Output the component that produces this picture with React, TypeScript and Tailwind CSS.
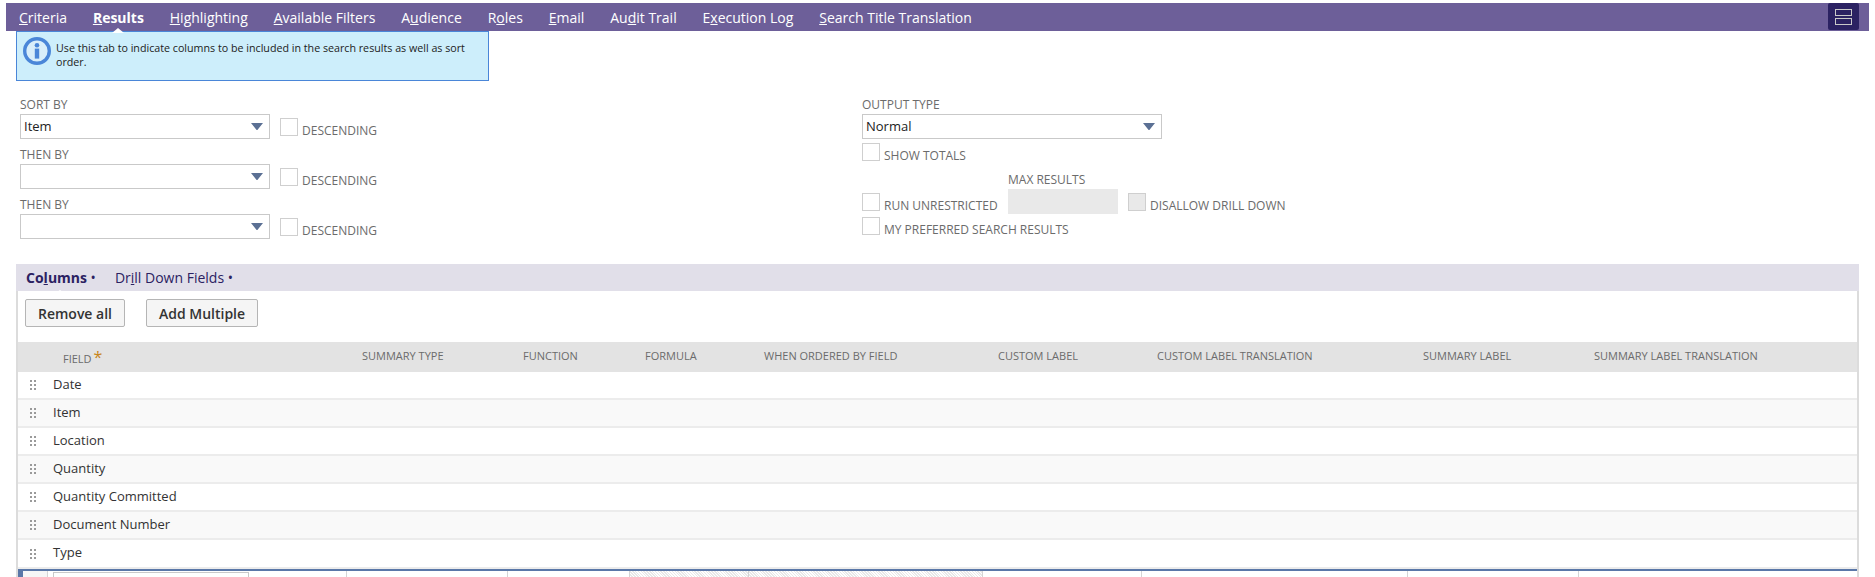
import React from 'react';

const font = { fontFamily: '"Open Sans", "Liberation Sans", sans-serif' };

const navTabs: { pre: string; key_: string; post: string; active?: boolean }[] = [
  { pre: '', key_: 'C', post: 'riteria' },
  { pre: '', key_: 'R', post: 'esults', active: true },
  { pre: '', key_: 'H', post: 'ighlighting' },
  { pre: '', key_: 'A', post: 'vailable Filters' },
  { pre: 'A', key_: 'u', post: 'dience' },
  { pre: 'R', key_: 'o', post: 'les' },
  { pre: '', key_: 'E', post: 'mail' },
  { pre: 'Au', key_: 'd', post: 'it Trail' },
  { pre: 'E', key_: 'x', post: 'ecution Log' },
  { pre: '', key_: 'S', post: 'earch Title Translation' },
];

const columns = [
  'SUMMARY TYPE',
  'FUNCTION',
  'FORMULA',
  'WHEN ORDERED BY FIELD',
  'CUSTOM LABEL',
  'CUSTOM LABEL TRANSLATION',
  'SUMMARY LABEL',
  'SUMMARY LABEL TRANSLATION',
];

const rows = ['Date', 'Item', 'Location', 'Quantity', 'Quantity Committed', 'Document Number', 'Type'];

const gridCols = 'grid grid-cols-[29px_299px_161px_122px_119px_234px_159px_266px_171px_278px]';

const Checkbox = ({ disabled }: { disabled?: boolean }) => (
  <span className={`block w-[18px] h-[18px] shrink-0 border border-[#cfcfcf] ${disabled ? 'bg-[#e9e9e9]' : 'bg-white'}`} />
);

const CheckLabel = ({ text, disabled }: { text: string; disabled?: boolean }) => (
  <div className="flex items-start">
    <Checkbox disabled={disabled} />
    <span className="ml-[4px] mt-[4px] text-[12px] leading-[17px] text-[#6b6b6b] whitespace-nowrap">{text}</span>
  </div>
);

const Select = ({ value, width }: { value: string; width: string }) => (
  <div className={`${width} h-[25px] border border-[#c9c9c9] bg-white flex items-center justify-between pl-[3px] pr-[6px] text-[13px] text-[#222]`}>
    <span>{value}</span>
    <svg width="12" height="7" viewBox="0 0 12 7" className="shrink-0">
      <path d="M0 0h12L6.8 6.4a1 1 0 0 1-1.6 0z" fill="#5b7094" />
    </svg>
  </div>
);

const SortRow = ({ label, value }: { label: string; value: string }) => (
  <div className="h-[50px]">
    <div className="text-[12px] leading-[16px] h-[17px] text-[#6b6b6b]">{label}</div>
    <div className="flex items-start">
      <Select value={value} width="w-[250px]" />
      <div className="ml-[10px] mt-[4px]">
        <CheckLabel text="DESCENDING" />
      </div>
    </div>
  </div>
);

const Grip = () => (
  <svg width="6" height="10" viewBox="0 0 6 10" fill="#9a9a9a">
    <rect x="0" y="0" width="2" height="2" />
    <rect x="4" y="0" width="2" height="2" />
    <rect x="0" y="4" width="2" height="2" />
    <rect x="4" y="4" width="2" height="2" />
    <rect x="0" y="8" width="2" height="2" />
    <rect x="4" y="8" width="2" height="2" />
  </svg>
);

export default function App() {
  return (
    <div style={font} className="w-[1875px] h-[577px] overflow-hidden bg-white pt-[3px]">
      {/* Top tab bar */}
      <div className="relative ml-[6px] w-[1863px] h-[28px] bg-[#6d5f99] flex items-center justify-between pl-[13px] pr-[10px]">
        <div className="flex items-center gap-[25.9px] text-[14px] text-white whitespace-nowrap">
          {navTabs.map((t) => (
            <div key={t.pre + t.key_ + t.post} className={`relative ${t.active ? 'font-bold' : ''}`}>
              {t.pre}
              <u>{t.key_}</u>
              {t.post}
              {t.active && (
                <span className="absolute left-1/2 -translate-x-1/2 top-[21px] w-0 h-0 border-x-[6px] border-x-transparent border-b-[5px] border-b-white" />
              )}
            </div>
          ))}
        </div>
        <div className="w-[31px] h-[27px] -mt-px rounded-[2px] bg-[#2b2262] flex flex-col items-center justify-center gap-[2px]">
          <span className="block w-[17px] h-[7px] border border-[#c9c9c9]" />
          <span className="block w-[17px] h-[7px] border border-[#c9c9c9]" />
        </div>
      </div>

      {/* Info notice */}
      <div className="ml-[16px] w-[473px] h-[50px] border border-[#4a86d8] bg-[#cdeefb] flex items-start pl-[6px] pt-[5px]">
        <svg width="28" height="28" viewBox="0 0 28 28" className="shrink-0">
          <circle cx="14" cy="14" r="12.3" fill="#d9eefa" stroke="#4a86d8" strokeWidth="3.4" />
          <circle cx="14" cy="8.2" r="2.3" fill="#4a86d8" />
          <rect x="11.8" y="11.6" width="4.4" height="10" fill="#4a86d8" />
        </svg>
        <p className="ml-[5px] mt-[4px] text-[10.7px] leading-[14px] text-[#222] w-[420px]">
          Use this tab to indicate columns to be included in the search results as well as sort order.
        </p>
      </div>

      {/* Sort and output options */}
      <div className="flex mt-[16px] h-[167px]">
        <div className="ml-[20px] w-[842px]">
          <SortRow label="SORT BY" value="Item" />
          <SortRow label="THEN BY" value="" />
          <SortRow label="THEN BY" value="" />
        </div>
        <div>
          <div className="text-[12px] leading-[16px] h-[17px] text-[#6b6b6b]">OUTPUT TYPE</div>
          <Select value="Normal" width="w-[300px]" />
          <div className="mt-[4px]">
            <CheckLabel text="SHOW TOTALS" />
          </div>
          <div className="flex items-start mt-[8px]">
            <div className="mt-[21px] w-[146px]">
              <CheckLabel text="RUN UNRESTRICTED" />
            </div>
            <div>
              <div className="text-[12px] leading-[16px] h-[17px] text-[#6b6b6b]">MAX RESULTS</div>
              <div className="w-[110px] h-[25px] bg-[#e9e9e9]" />
            </div>
            <div className="ml-[10px] mt-[21px]">
              <CheckLabel text="DISALLOW DRILL DOWN" disabled />
            </div>
          </div>
          <div className="mt-[3px]">
            <CheckLabel text="MY PREFERRED SEARCH RESULTS" />
          </div>
        </div>
      </div>

      {/* Sublist */}
      <div className="ml-[16px] w-[1843px] h-[313px] flex flex-col">
        <div className="relative h-[27px] shrink-0 bg-[#e1dfe9] flex items-center pl-[10px] text-[14px] text-[#2b2262] whitespace-nowrap">
          <div className="relative font-bold">
            Co<u>l</u>umns
            <span className="font-normal"> •</span>
            <span className="absolute left-[28px] top-[23px] w-0 h-0 border-x-[6px] border-x-transparent border-b-[4px] border-b-white" />
          </div>
          <div className="ml-[19px]">
            Dr<u>i</u>ll Down Fields •
          </div>
        </div>
        <div className="flex-1 border-x-2 border-x-[#dcdcdc] min-h-0">
          <div className="flex items-start gap-[21px] pl-[7px] pt-[8px] h-[51px]">
            <button className="h-[28px] w-[100px] rounded-[2px] border border-[#b5b5b5] bg-[#f5f5f5] text-[14px] font-semibold text-[#333]">
              Remove all
            </button>
            <button className="h-[28px] w-[112px] rounded-[2px] border border-[#b5b5b5] bg-[#f5f5f5] text-[14px] font-semibold text-[#333]">
              Add Multiple
            </button>
          </div>

          <div className={`${gridCols} h-[30px] bg-[#e3e3e3] text-[11px] text-[#6b6b6b] whitespace-nowrap`}>
            <div />
            <div className="pl-[16px] pt-[9px] leading-[16px]">
              FIELD<span className="ml-[2px] text-[16px] leading-[10px] text-[#c8861a]">*</span>
            </div>
            {columns.map((c) => (
              <div key={c} className="pl-[16px] pt-[6px] leading-[16px]">
                {c}
              </div>
            ))}
          </div>

          {rows.map((r, i) => (
            <div
              key={r}
              className={`flex items-center border-b-2 border-b-[#ececec] text-[13px] text-[#333] ${i % 2 === 1 ? 'bg-[#f9f9f9]' : 'bg-white'} ${i === rows.length - 1 ? 'h-[29px] border-b-0' : 'h-[28px]'}`}
            >
              <div className="w-[29px] pl-[12px] flex items-center">
                <Grip />
              </div>
              <div className="pl-[6px] -mt-[1px]">{r}</div>
            </div>
          ))}

          {/* Edit row */}
          <div className={`${gridCols} h-[12px] overflow-hidden border-t-2 border-t-[#5a77a8]`}>
            <div className="bg-[#f6f6f6] border-l-[5px] border-l-[#5a77a8]" />
            <div className="border-l border-l-[#d5d5d5] pl-[5px] pt-[1px]">
              <div className="w-[196px] h-[20px] border border-[#c9c9c9] bg-white" />
            </div>
            <div className="border-l border-l-[#d5d5d5]" />
            <div className="border-l border-l-[#d5d5d5]" />
            <div className="border-l border-l-[#d5d5d5] bg-[repeating-linear-gradient(45deg,#e8e8e8_0,#e8e8e8_1px,#ffffff_1px,#ffffff_2px)]" />
            <div className="border-l border-l-[#d5d5d5] bg-[repeating-linear-gradient(45deg,#e8e8e8_0,#e8e8e8_1px,#ffffff_1px,#ffffff_2px)]" />
            <div className="border-l border-l-[#d5d5d5]" />
            <div className="border-l border-l-[#d5d5d5]" />
            <div className="border-l border-l-[#d5d5d5]" />
            <div className="border-l border-l-[#d5d5d5]" />
          </div>
        </div>
      </div>
    </div>
  );
}
